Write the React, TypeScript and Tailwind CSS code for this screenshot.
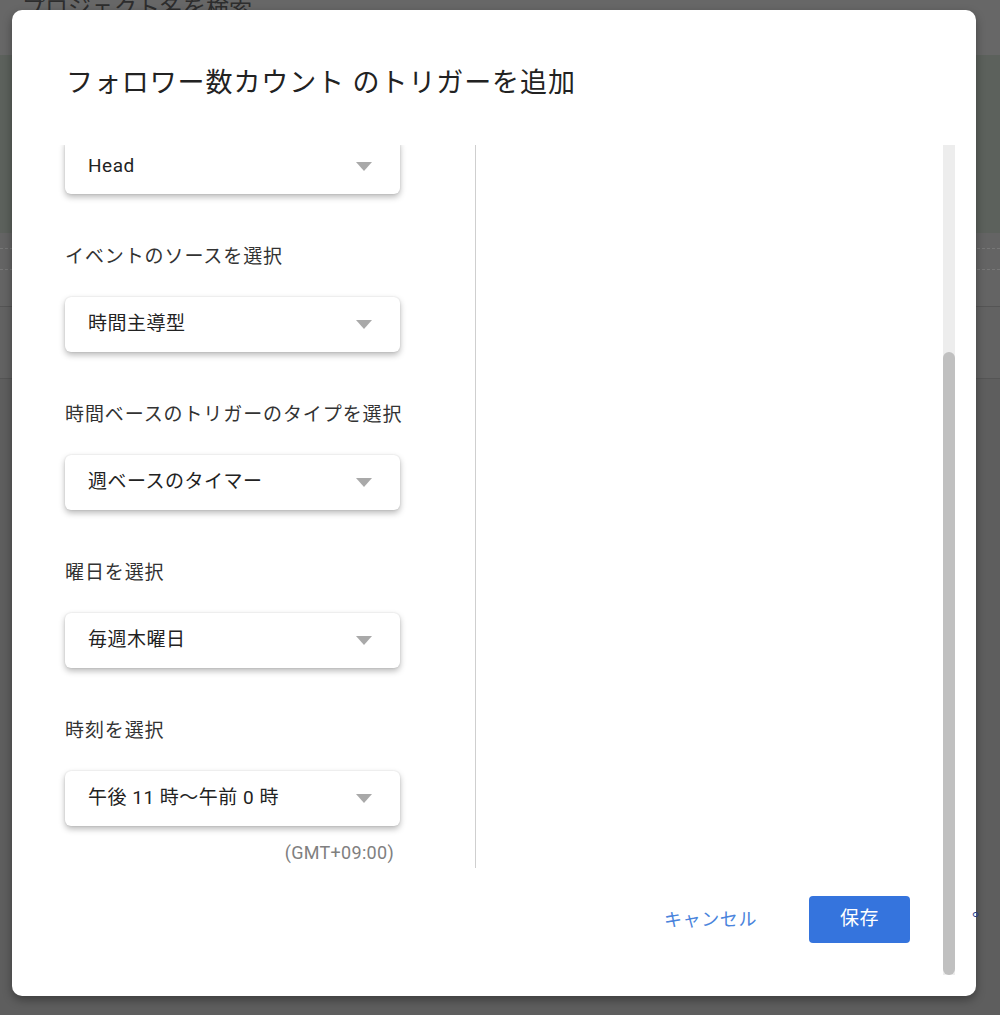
import React from "react";

const font = { fontFamily: '"Roboto", "Noto Sans CJK JP", "Noto Sans", sans-serif' };

function Caret() {
  return (
    <svg width="16" height="9" viewBox="0 0 16 9" className="shrink-0">
      <path d="M0 0 L16 0 L8 9 Z" fill="#a9a9a9" />
    </svg>
  );
}

function Select({ value }: { value: string }) {
  return (
    <div className="flex h-[55px] w-[335px] items-center justify-between rounded-[6px] bg-white pl-[23px] pr-[28px] shadow-[0_3px_6px_rgba(0,0,0,0.28),0_0_2px_rgba(0,0,0,0.12)]">
      <span className="text-[19px] tracking-[0.5px] text-[#222]">{value}</span>
      <Caret />
    </div>
  );
}

function Field({ label, value }: { label: string; value: string }) {
  return (
    <div className="mt-[50px] flex flex-col">
      <div className="h-[25px] text-[19px] leading-[25px] tracking-[0.9px] text-[#333]">{label}</div>
      <div className="mt-[28px]">
        <Select value={value} />
      </div>
    </div>
  );
}

export default function App() {
  return (
    <div className="relative h-[1015px] w-full overflow-hidden bg-[#606060]" style={font}>
      {/* page behind the dimmed overlay */}
      <div className="flex h-full flex-col">
        <div className="h-[55px] bg-[#676767] px-[22px]">
          <div className="-mt-[8px] text-[23px] text-[#2d2d2d]">プロジェクト名を検索</div>
        </div>
        <div className="h-[178px] bg-[#5c615c]" />
        <div className="h-[74px] border-b border-[#555] bg-[#646464]">
          <div className="mt-[15px] border-t border-dashed border-[#777]" />
          <div className="mt-[20px] border-t border-dashed border-[#777]" />
        </div>
        <div className="h-[72px] border-b border-[#555] bg-[#626262]" />
        <div className="flex-1 bg-[#5e5e5e]" />
      </div>

      {/* dialog */}
      <div className="absolute left-[12px] top-[10px] flex h-[986px] w-[964px] flex-col rounded-[10px] bg-white shadow-[0_4px_10px_rgba(0,0,0,0.35)]">
        <h1 className="pl-[54px] pt-[55px] text-[27px] leading-[36px] tracking-[0.9px] text-[#222]">
          フォロワー数カウント のトリガーを追加
        </h1>

        <div className="mt-[44px] flex h-[830px]">
          <div className="flex flex-1 flex-col">
            {/* scrolled form body */}
            <div className="flex h-[723px]">
              <div className="w-[463px] overflow-hidden pl-[53px]">
                <div className="-mt-[6px] flex flex-col">
                  <Select value="Head" />
                  <Field label="イベントのソースを選択" value="時間主導型" />
                  <Field label="時間ベースのトリガーのタイプを選択" value="週ベースのタイマー" />
                  <Field label="曜日を選択" value="毎週木曜日" />
                  <Field label="時刻を選択" value="午後 11 時〜午前 0 時" />
                  <div className="mt-[13px] w-[335px] pr-[6px] text-right text-[18px] tracking-[0.3px] text-[#808080]">
                    (GMT+09:00)
                  </div>
                </div>
              </div>
              <div className="w-px bg-[#cfcfcf]" />
              <div className="flex-1" />
            </div>

            {/* footer */}
            <div className="mt-[28px] flex items-center justify-end gap-[52px] pr-[33px]">
              <button className="text-[18px] tracking-[0.6px] text-[#4a84dc]">キャンセル</button>
              <button className="h-[47px] w-[101px] rounded-[4px] bg-[#3574dd] text-[19px] tracking-[0.5px] text-white">
                保存
              </button>
            </div>
          </div>

          {/* scrollbar */}
          <div className="mr-[21px] flex w-[12px] flex-col bg-[#ededed]">
            <div className="h-[207px]" />
            <div className="flex-1 rounded-full bg-[#c0c0c0]" />
          </div>
        </div>
      </div>

      <div className="absolute left-[972px] top-[898px] text-[18px] leading-[24px] text-[#2a3f8f]">。</div>
    </div>
  );
}
